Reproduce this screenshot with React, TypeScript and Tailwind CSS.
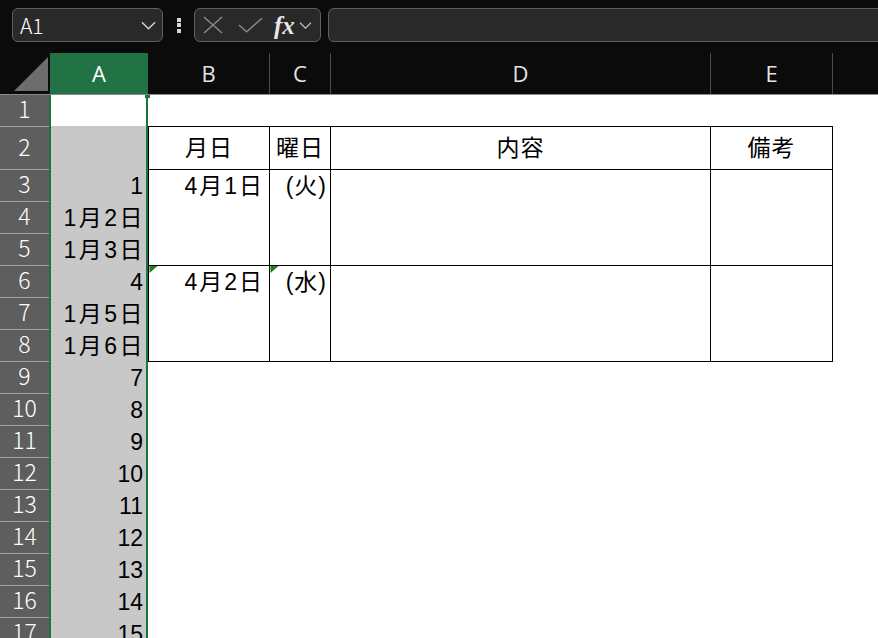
import React from "react";

const JP = { fontFamily: '"Liberation Sans", "Noto Sans CJK JP", sans-serif' };
const UI = { fontFamily: '"Noto Sans CJK JP", "Noto Sans", sans-serif' };

// column A values, row 2 onward (row 2 is empty)
const colA = ["", "1", "1月2日", "1月3日", "4", "1月5日", "1月6日", "7", "8", "9", "10", "11", "12", "13", "14", "15"];
const rowNums = Array.from({ length: 17 }, (_, i) => i + 1);

function Chevron({ className }: { className?: string }) {
  return (
    <svg viewBox="0 0 16 9" className={className} fill="none" stroke="currentColor" strokeWidth="1.6">
      <path d="M1 1l7 7 7-7" />
    </svg>
  );
}

function ErrorMark() {
  return (
    <svg viewBox="0 0 8 7" className="absolute left-0 top-0 w-[9px] h-[7px]">
      <path d="M0 0h8L0 7z" fill="#1d7d1d" />
    </svg>
  );
}

function FormulaBar() {
  return (
    <div className="h-[53px] shrink-0 bg-[#0b0b0b] flex items-start pt-[8px] pl-[12px]">
      <div className="w-[151px] h-[34px] shrink-0 rounded-[6px] border border-[#5f5f5f] bg-[#292929] flex items-center justify-between pl-[7px] pr-[6px]">
        <span className="text-[21px] font-light text-white leading-none" style={UI}>A1</span>
        <Chevron className="w-[15px] h-[9px] text-[#cfcfcf]" />
      </div>
      <div className="w-[31px] h-[34px] shrink-0 flex flex-col items-center justify-center gap-[1.5px]">
        <span className="w-[4px] h-[4px] bg-[#d6d6d6]" />
        <span className="w-[4px] h-[4px] bg-[#d6d6d6]" />
        <span className="w-[4px] h-[4px] bg-[#d6d6d6]" />
      </div>
      <div className="w-[127px] h-[34px] shrink-0 rounded-[6px] border border-[#5f5f5f] bg-[#292929] flex items-center pl-[8px]">
        <svg viewBox="0 0 20 18" className="w-[20px] h-[18px] text-[#8a8a8a]" fill="none" stroke="currentColor" strokeWidth="1.5">
          <path d="M1 1l18 16M19 1L1 17" />
        </svg>
        <svg viewBox="0 0 26 16" className="ml-[15px] w-[25px] h-[16px] text-[#8a8a8a]" fill="none" stroke="currentColor" strokeWidth="1.5">
          <path d="M1 8l8 7L25 1" />
        </svg>
        <span
          className="ml-[11px] text-[25px] italic font-bold text-[#e8e8e8] leading-none"
          style={{ fontFamily: '"Liberation Serif", serif' }}
        >
          fx
        </span>
        <Chevron className="ml-[4px] w-[13px] h-[7px] text-[#bdbdbd]" />
      </div>
      <div className="ml-[7px] w-[580px] h-[34px] shrink-0 rounded-[6px] border border-[#5f5f5f] bg-[#292929]" />
    </div>
  );
}

function ColumnHeaders() {
  const cols: [string, string][] = [
    ["B", "w-[122px]"],
    ["C", "w-[61px]"],
    ["D", "w-[380px]"],
    ["E", "w-[122px]"],
  ];
  return (
    <div className="h-[42px] shrink-0 flex bg-[#0b0b0b] border-b border-[#8a8a8a]">
      <div className="w-[50px] shrink-0 flex items-end justify-end pr-[2px] pb-[3px]">
        <svg viewBox="0 0 34 34" className="w-[34px] h-[34px]">
          <path d="M0 34L34 0v34z" fill="#6d6d6d" />
        </svg>
      </div>
      <div className="w-[98px] shrink-0 bg-[#217346] flex items-center justify-center text-[22px] text-white" style={{ fontFamily: '"Open Sans", sans-serif' }}>
        A
      </div>
      {cols.map(([c, w]) => (
        <div
          key={c}
          className={`${w} shrink-0 border-r border-[#4c4c4c] flex items-center justify-center text-[22px] text-[#e4e4e4]`}
          style={{ fontFamily: '"Open Sans", sans-serif' }}
        >
          {c}
        </div>
      ))}
      <div className="flex-1" />
    </div>
  );
}

function RowHeaders() {
  return (
    <div className="w-[49px] shrink-0 bg-[#5e5e5e] flex flex-col">
      {rowNums.map((n) => (
        <div
          key={n}
          className={`${n === 2 ? "h-[43px]" : "h-[32px]"} shrink-0 border-b border-[#a3a3a3] flex items-center justify-center pb-[4px] text-[23px] font-light text-white leading-none`}
          style={UI}
        >
          {n}
        </div>
      ))}
    </div>
  );
}

function ColumnA() {
  return (
    <div className="relative w-[99px] shrink-0 border-x-2 border-[#1f7145] flex flex-col">
      <span className="absolute -top-[2px] -right-[4px] w-[5px] h-[5px] bg-[#1f7145]" />
      <div className="h-[31px] shrink-0 bg-white" />
      <div className="flex-1 bg-[#c8c8c8] flex flex-col">
        {colA.map((v, i) => (
          <div
            key={i}
            className={`${i === 0 ? "h-[44px]" : "h-[32px]"} ${
              v.includes("月") ? "tracking-[2.5px] pr-[1px]" : "pr-[3px]"
            } shrink-0 text-right text-[23px] leading-[32px] text-black whitespace-nowrap`}
            style={JP}
          >
            {v}
          </div>
        ))}
      </div>
    </div>
  );
}

function Schedule() {
  const head = ["月日", "曜日", "内容", "備考"];
  const rows = [
    ["4月1日", "(火)"],
    ["4月2日", "(水)"],
  ];
  return (
    <div className="flex-1 bg-white flex flex-col">
      <div className="h-[31px] shrink-0" />
      <div className="w-[685px] grid grid-cols-[121px_61px_380px_122px] border-l border-t border-black text-[23px] text-black" style={JP}>
        {head.map((h) => (
          <div key={h} className="h-[43px] border-r border-b border-black flex items-center justify-center tracking-[1px]">
            {h}
          </div>
        ))}
        {rows.map(([d, w], i) => (
          <React.Fragment key={d}>
            <div className="relative h-[96px] border-r border-b border-black text-right pr-[5px] leading-[32px] tracking-[2px]">
              {i === 1 && <ErrorMark />}
              {d}
            </div>
            <div className="relative h-[96px] border-r border-b border-black text-right pr-[3px] leading-[32px] tracking-[1px]">
              {i === 1 && <ErrorMark />}
              {w}
            </div>
            <div className="h-[96px] border-r border-b border-black" />
            <div className="h-[96px] border-r border-b border-black" />
          </React.Fragment>
        ))}
      </div>
    </div>
  );
}

export default function App() {
  return (
    <div className="w-[878px] h-[638px] overflow-hidden bg-[#0b0b0b] flex flex-col">
      <FormulaBar />
      <ColumnHeaders />
      <div className="flex-1 flex overflow-hidden">
        <RowHeaders />
        <ColumnA />
        <Schedule />
      </div>
    </div>
  );
}
